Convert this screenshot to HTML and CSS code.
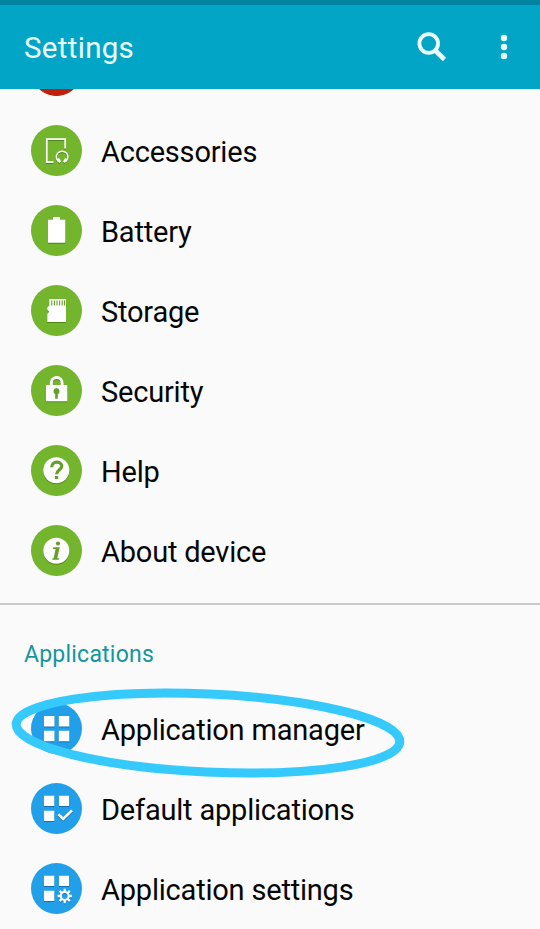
FILE: index.html
```html
<!DOCTYPE html>
<html lang="en">
<head>
<meta charset="utf-8">
<title>Settings</title>
<link rel="stylesheet" href="styles.css">
</head>
<body>
<div class="screen">
  <header class="bar">
    <h1 class="title">Settings</h1>
    <svg class="search" viewBox="0 0 32 32"><circle cx="12.7" cy="12.5" r="9.3" fill="none" stroke="currentColor" stroke-width="3.8"/><path d="M18.8 19L28.5 28.5" stroke="currentColor" stroke-width="4.6"/></svg>
    <svg class="more" viewBox="0 0 8 26"><circle cx="4" cy="4" r="3.2"/><circle cx="4" cy="13" r="3.2"/><circle cx="4" cy="22" r="3.2"/></svg>
  </header>
  <main>
    <div class="peek"><span class="dot"></span></div>
    <ul class="list">
      <li class="row">
        <svg class="icon green" viewBox="0 0 51 51"><circle class="disc" cx="25.5" cy="25.5" r="25.5"/><g class="glyph line" stroke-width="1.8"><path d="M22.5 37.2H15.8V14.2H34.2V23.5"/><path d="M27.6 36.6A5.8 5.8 0 1 1 34.6 36.6" stroke-width="1.5"/><path d="M27 33.7L29.2 37.4M35.2 33.7L33 37.4" stroke-width="2.4"/></g></svg>
        <span class="label">Accessories</span>
      </li>
      <li class="row">
        <svg class="icon green" viewBox="0 0 51 51"><circle class="disc" cx="25.5" cy="25.5" r="25.5"/><path class="glyph" d="M22 12H29V14.7H34.3V37.7H17V14.7H22Z"/></svg>
        <span class="label">Battery</span>
      </li>
      <li class="row">
        <svg class="icon green" viewBox="0 0 51 51"><circle class="disc" cx="25.5" cy="25.5" r="25.5"/><path class="glyph" d="M18.3 14H35V37H16.3V29L17.8 27.5V26L16.3 25V22.5L18.3 20.5Z"/><path class="cut-line" d="M20.8 15.5V20.5M23.4 15.5V20.5M26 15.5V20.5M28.6 15.5V20.5M31.2 15.5V20.5M33.5 15.5V20.5"/></svg>
        <span class="label">Storage</span>
      </li>
      <li class="row">
        <svg class="icon green" viewBox="0 0 51 51"><circle class="disc" cx="25.5" cy="25.5" r="25.5"/><g class="glyph"><path d="M15 20H36.3V36.3H15Z"/><path d="M20.3 20.5V17.8A5.4 5.4 0 0 1 31.1 17.8V20.5" fill="none" stroke="#fff" stroke-width="3"/></g><path class="cut" d="M25.5 23A3.3 3.3 0 0 0 24.2 29.2V33.7H26.8V29.2A3.3 3.3 0 0 0 25.5 23Z"/></svg>
        <span class="label">Security</span>
      </li>
      <li class="row">
        <svg class="icon green" viewBox="0 0 51 51"><circle class="disc" cx="25.5" cy="25.5" r="25.5"/><circle class="glyph" cx="25.3" cy="25.2" r="13"/><path class="cut-line bold" d="M20.7 22.2C20.7 15.2 31 16 30.8 21.3C30.6 24.8 25.6 24.8 25.6 29.2"/><path class="cut" d="M24 31H27.2V34H24Z"/></svg>
        <span class="label">Help</span>
      </li>
      <li class="row">
        <svg class="icon green" viewBox="0 0 51 51"><circle class="disc" cx="25.5" cy="25.5" r="25.5"/><circle class="glyph" cx="25.3" cy="25.7" r="13"/><g class="cut"><circle cx="27" cy="18.5" r="2.1"/><path d="M22.3 22.3H28.7L26.3 33.2H28.2L27.8 34.8H21.2L21.6 33.2H22.6L24.6 24H22Z"/></g></svg>
        <span class="label">About device</span>
      </li>
    </ul>
    <section class="apps">
      <h2 class="heading">Applications</h2>
      <ul class="list">
        <li class="row">
          <svg class="icon blue" viewBox="0 0 51 51"><circle class="disc" cx="25.5" cy="25.5" r="25.5"/><path class="glyph" d="M13 13H23.5V23.5H13ZM27.8 13H38.3V23.5H27.8ZM13 27.8H23.5V38.3H13ZM27.8 27.8H38.3V38.3H27.8Z"/></svg>
          <span class="label">Application manager</span>
          <svg class="ring" viewBox="0 0 396 92"><ellipse cx="198" cy="46" rx="192" ry="39" transform="rotate(2.65 198 46)"/></svg>
        </li>
        <li class="row">
          <svg class="icon blue" viewBox="0 0 51 51"><circle class="disc" cx="25.5" cy="25.5" r="25.5"/><g class="glyph"><path d="M13 12.8H23.3V23H13ZM28 12.8H38V23H28ZM13 27.8H23.3V38H13Z"/><path d="M27.5 31.3L32.2 36L41 27.3" fill="none" stroke="#fff" stroke-width="2.6"/></g></svg>
          <span class="label">Default applications</span>
        </li>
        <li class="row">
          <svg class="icon blue" viewBox="0 0 51 51"><circle class="disc" cx="25.5" cy="25.5" r="25.5"/><g class="glyph"><path d="M13 12.8H23.3V23H13ZM28 12.8H38V23H28ZM13 27.8H23.3V38H13Z"/><circle cx="33.7" cy="33" r="4" fill="none" stroke="#fff" stroke-width="2.2"/><path d="M33.7 25.8V29M33.7 37V40.2M26.5 33H29.7M37.7 33H40.9M28.6 27.9L30.9 30.2M36.5 35.8L38.8 38.1M28.6 38.1L30.9 35.8M36.5 30.2L38.8 27.9" stroke="#fff" stroke-width="2.3"/></g></svg>
          <span class="label">Application settings</span>
        </li>
      </ul>
    </section>
  </main>
</div>
</body>
</html>
```
FILE: styles.css
```css
* { box-sizing: border-box; }
body { margin: 0; background: #fafafa; font-family: Roboto, sans-serif; color: #060606; }
.screen { height: 929px; overflow: hidden; display: flex; flex-direction: column; }
.bar {
  flex: none;
  height: 89px;
  padding: 0 32px 0 24px;
  border-top: 5px solid #00849f;
  background: #02a5c6;
  color: #eaffff;
  display: flex;
  align-items: center;
}
.title { margin: 0; padding-top: 2px; flex: 1; font-size: 29.5px; font-weight: 400; letter-spacing: 0.3px; }
.search { width: 32px; height: 32px; margin-right: 52px; }
.more { width: 8px; height: 26px; fill: currentColor; }
.peek { height: 21px; display: flex; align-items: flex-start; padding-left: 31px; }
.dot { width: 51px; height: 7px; background: radial-gradient(circle 25.5px at 25.5px -18.5px, #c1200a 25px, transparent 25.8px); }
.list { list-style: none; margin: 0; padding: 0; }
.row { height: 80px; padding-left: 31px; display: flex; align-items: center; gap: 19px; position: relative; }
.icon { width: 51px; height: 51px; flex: none; }
.green { --disc: #73b52d; --shade: #4d8419; }
.blue { --disc: #229fe9; --shade: #176fb0; }
.disc { fill: var(--disc); }
.glyph { fill: #fff; filter: drop-shadow(0.8px 1.2px 0.3px var(--shade)); }
.line { fill: none; stroke: #fff; }
.cut { fill: #659f28; }
.cut-line { fill: none; stroke: #659f28; stroke-width: 1.1; }
.bold { stroke-width: 3.2; }
.label { font-size: 29px; line-height: 34px; padding-top: 3px; white-space: nowrap; letter-spacing: -0.2px; }
.apps { border-top: 2px solid #cacaca; margin-top: 13px; }
.heading { margin: 0; padding: 36px 24px 0; height: 83px; font-size: 23px; line-height: 28px; font-weight: 400; letter-spacing: 0.22px; color: #1495a0; }
.ring { position: absolute; left: 9.5px; top: -1.5px; width: 396px; height: 92px; fill: none; stroke: #36c9fc; stroke-width: 9; overflow: visible; }
```
